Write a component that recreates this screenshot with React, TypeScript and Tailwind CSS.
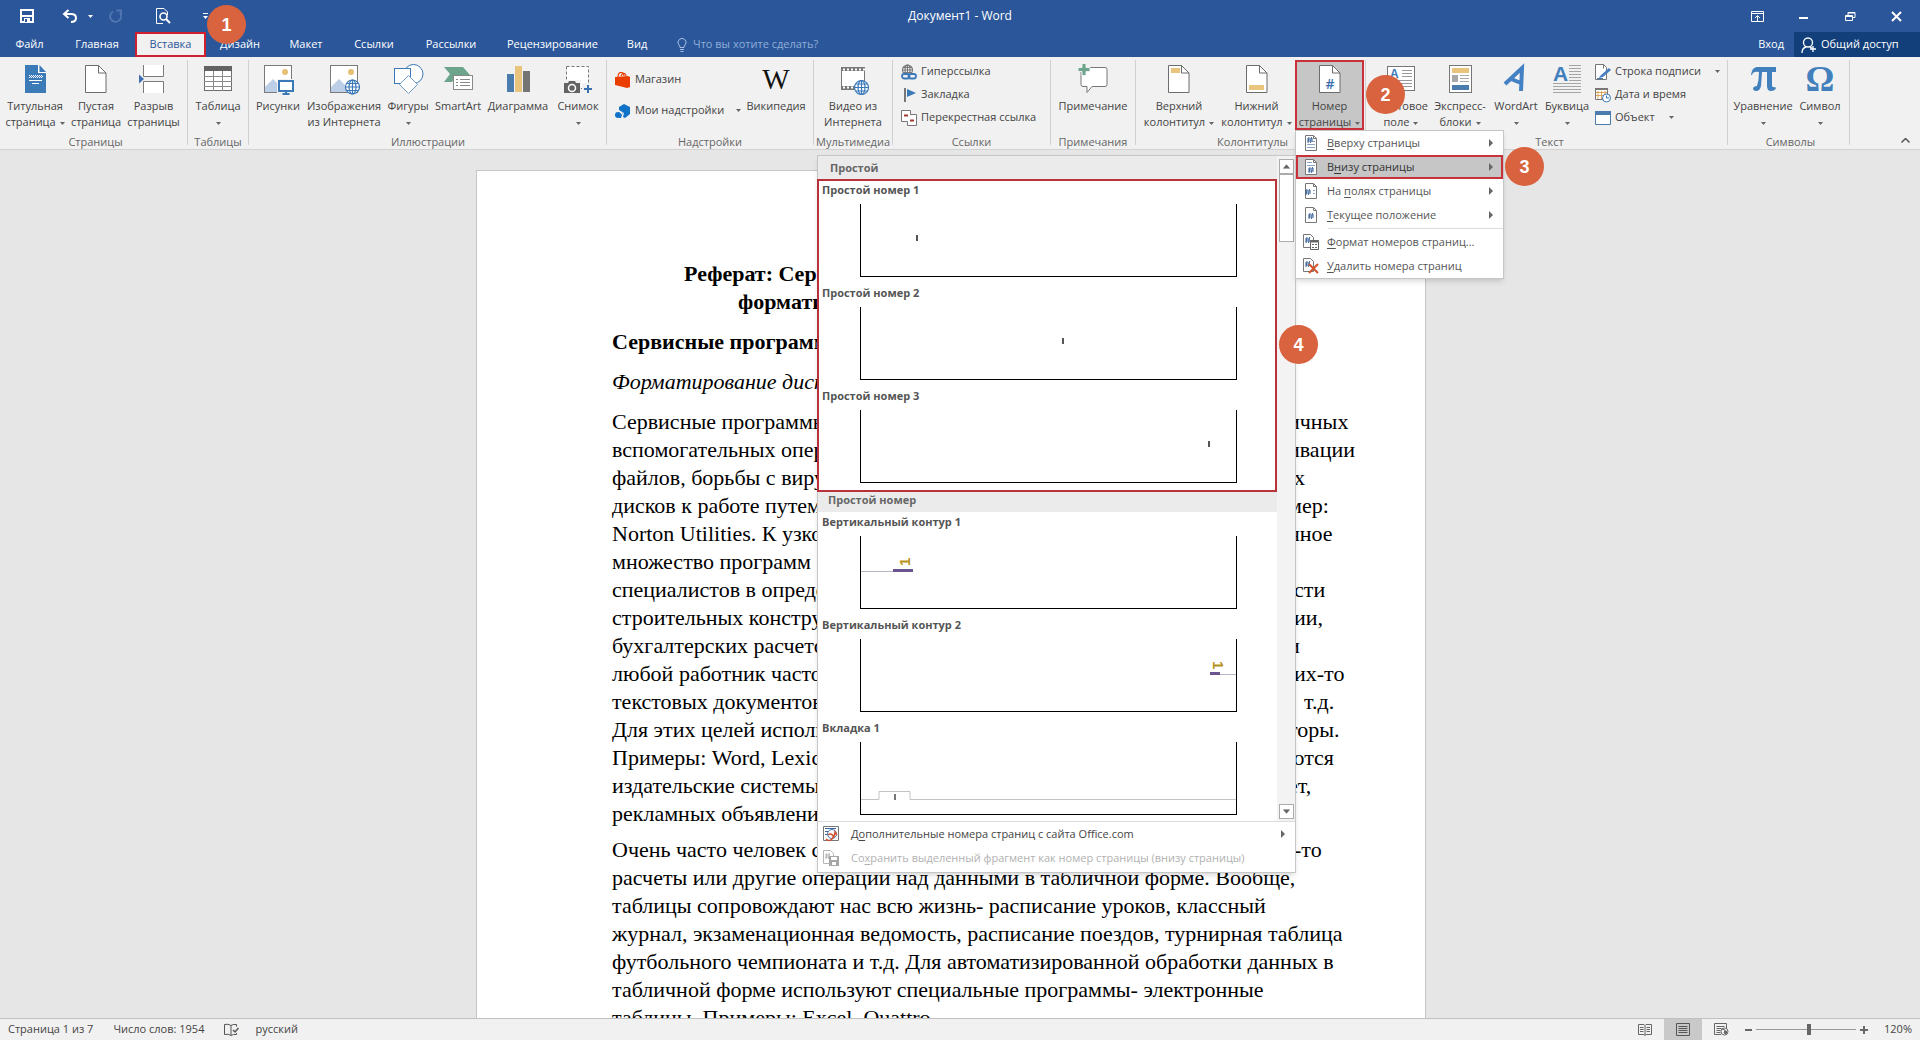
import React from "react";
import { clsx } from "clsx";

type IconProps = { children: React.ReactNode; className?: string };

const BigSvg: React.FC<IconProps> = ({ children, className }) => (
  <svg viewBox="0 0 32 32" className={clsx("h-8 w-8 shrink-0", className)} fill="none" aria-hidden="true">
    {children}
  </svg>
);

const SmallSvg: React.FC<IconProps> = ({ children, className }) => (
  <svg viewBox="0 0 16 16" className={clsx("h-4 w-4 shrink-0", className)} fill="none" aria-hidden="true">
    {children}
  </svg>
);

const Caret: React.FC<{ className?: string }> = ({ className }) => (
  <svg viewBox="0 0 5 3" className={clsx("inline-block h-[3px] w-[5px] shrink-0 align-middle", className)} aria-hidden="true">
    <path d="M0 0h5L2.5 3z" fill="currentColor" />
  </svg>
);

/* ---------- ribbon icons ---------- */

const PageOutline = () => <path d="M5.5 2.5h13l7.5 7.5v19.500H5.500z" fill="#fff" stroke="#6d6d6d" />;

const Fold = () => <path d="M18.5 2.5v7.5h7.500" stroke="#6d6d6d" />;

const CoverPageIcon = () => (
  <BigSvg>
    <path d="M6 2h13v8h8v20H6z" fill="#3d7ab8" />
    <path d="M20.5 2l6.5 7h-6.5z" fill="#3d7ab8" />
    <path d="M19.5 2v7.5H27" stroke="#fff" />
    <path d="M10 12.5h13M10 14.5h13" stroke="#fff" strokeDasharray="1 1" />
    <path d="M11 13.5h13" stroke="#fff" strokeDasharray="1 1" />
    <path d="M10 17.5h13M13 20.5h7" stroke="#fff" />
  </BigSvg>
);

const BlankPageIcon = () => (
  <BigSvg>
    <PageOutline />
    <Fold />
  </BigSvg>
);

const PageBreakIcon = () => (
  <BigSvg>
    <path d="M5.5 2v11.5h20V2" fill="#fff" stroke="#7a7a7a" />
    <path d="M5.5 30V18.5h20V30" fill="#fff" stroke="#7a7a7a" />
    <path d="M1 11.5l5 4.5-5 4.5z" fill="#3f6fae" />
  </BigSvg>
);

const TableIcon = () => (
  <BigSvg>
    <rect x="2.5" y="3.5" width="27" height="24" fill="#fff" stroke="#6d6d6d" />
    <path d="M2 3h28v5H2z" fill="#636363" />
    <path d="M11.5 8v20M20.5 8v20M2 13.5h28M2 18.5h28M2 23.5h28" stroke="#8a8a8a" />
  </BigSvg>
);

const Photo = () => (
  <>
    <rect x="2.5" y="2.5" width="27" height="27" fill="#fff" stroke="#7a7a7a" />
    <circle cx="23" cy="9" r="3" fill="#e5bf74" />
    <path d="M3 24l8-8 8 8v5H3z" fill="#bccfe6" />
  </>
);

const PicturesIcon = () => (
  <BigSvg>
    <Photo />
    <path d="M15 16h17v15H15z" fill="#f1f1f1" />
    <rect x="17" y="18" width="14" height="10" fill="#fff" stroke="#3b78b8" strokeWidth="2" />
    <path d="M24 28v3M20.5 31h7" stroke="#3b78b8" strokeWidth="2" />
  </BigSvg>
);

const Globe: React.FC<{ cx: number; cy: number; r: number; color?: string }> = ({ cx, cy, r, color = "#3b78b8" }) => (
  <g stroke={color} strokeWidth="1.2" fill="none">
    <circle cx={cx} cy={cy} r={r} fill="#fff" />
    <ellipse cx={cx} cy={cy} rx={r / 2} ry={r} />
    <path d={`M${cx - r} ${cy}h${2 * r}M${cx - r + 1} ${cy - r / 2}h${2 * r - 2}M${cx - r + 1} ${cy + r / 2}h${2 * r - 2}M${cx} ${cy - r}v${2 * r}`} />
  </g>
);

const OnlinePicturesIcon = () => (
  <BigSvg>
    <Photo />
    <Globe cx={24.5} cy={24} r={7} />
  </BigSvg>
);

const ShapesIcon = () => (
  <BigSvg>
    <circle cx="21.5" cy="11" r="9.5" fill="#fff" stroke="#3b78b8" />
    <rect x="2.5" y="5.5" width="16" height="15" fill="#fff" stroke="#3b78b8" />
    <path d="M16.5 12.5l9 9-9 9-9-9z" fill="#fff" stroke="#6f9ccb" />
  </BigSvg>
);

const SmartArtIcon = () => (
  <BigSvg>
    <path d="M2 4h19l7 8v3H13l-3 4H2l6-8z" fill="#6da58c" />
    <rect x="11.5" y="12.5" width="19" height="14" fill="#fff" stroke="#8a8a8a" />
    <path d="M14 16.5h2M18 16.5h10M14 19.5h2M18 19.5h10M14 22.5h2M18 22.5h10" stroke="#8a8a8a" />
  </BigSvg>
);

const ChartIcon = () => (
  <BigSvg>
    <path d="M5 11h7v18H5z" fill="#4a7dae" />
    <path d="M13 3h7v26h-7z" fill="#e8c47c" />
    <path d="M21 8h7v21h-7z" fill="#757575" />
  </BigSvg>
);

const ScreenshotIcon = () => (
  <BigSvg>
    <rect x="4.5" y="3.5" width="22" height="22" fill="#fff" stroke="#777" strokeDasharray="3 2" />
    <path d="M1 17h18v14H1z" fill="#f1f1f1" opacity=".9" />
    <path d="M2 20h4l1-2h6l1 2h4v10H2z" fill="#636363" />
    <circle cx="10" cy="25" r="3.5" stroke="#fff" strokeWidth="1.5" />
    <path d="M20 20h12v12H20z" fill="#f1f1f1" />
    <path d="M22 26h8M26 22v8" stroke="#3b6fae" strokeWidth="2" />
  </BigSvg>
);

const WikipediaIcon = () => (
  <BigSvg>
    <text x="16" y="26" textAnchor="middle" fontFamily="Liberation Serif, serif" fontSize="29" fill="#111">
      W
    </text>
  </BigSvg>
);

const OnlineVideoIcon = () => (
  <BigSvg>
    <rect x="4.5" y="4.5" width="23" height="22" fill="#fff" stroke="#777" />
    <path d="M5 6.5h23M5 24.5h23" stroke="#777" strokeWidth="3" />
    <path d="M6 6.5h22M6 24.5h22" stroke="#fff" strokeWidth="2" strokeDasharray="2 2" />
    <Globe cx={24.5} cy={24.5} r={7} />
  </BigSvg>
);

const CommentIcon = () => (
  <BigSvg>
    <path d="M6 4.5h22q2 0 2 2v15q0 2-2 2H15l-5 6v-6H6q-2 0-2-2v-15q0-2 2-2z" fill="#fff" stroke="#777" />
    <path d="M1 4.500h4v-4h4v4h4v4H9v4H5v-4H1z" fill="#6da58c" stroke="#f1f1f1" />
  </BigSvg>
);

const HeaderIcon = () => (
  <BigSvg>
    <PageOutline />
    <path d="M8 5h9v5H8z" fill="#e8c47c" />
    <Fold />
  </BigSvg>
);

const FooterIcon = () => (
  <BigSvg>
    <PageOutline />
    <path d="M8 22h15v5H8z" fill="#e8c47c" />
    <Fold />
  </BigSvg>
);

const PageNumberIcon = () => (
  <BigSvg>
    <PageOutline />
    <Fold />
    <text x="16" y="26" textAnchor="middle" fontFamily="Open Sans, sans-serif" fontSize="14" fontWeight="600" fill="#3b6fae">
      #
    </text>
  </BigSvg>
);

const TextBoxIcon = () => (
  <BigSvg>
    <rect x="2.5" y="3.5" width="27" height="24" fill="#fff" stroke="#777" />
    <text x="5" y="15" fontFamily="Liberation Sans, sans-serif" fontSize="12" fontWeight="700" fill="#3b78b8">
      A
    </text>
    <path d="M17 7.5h10M17 10.5h10M17 13.5h10M5 17.5h22M5 20.5h22M5 23.5h22" stroke="#999" />
  </BigSvg>
);

const QuickPartsIcon = () => (
  <BigSvg>
    <rect x="5.5" y="2.5" width="22" height="27" fill="#fff" stroke="#777" />
    <path d="M8 5h17v5H8z" fill="#e8c47c" />
    <path d="M8 12h6v7H8z" fill="#a8a8a8" />
    <path d="M16 12.5h9M16 15.5h9M16 18.5h9" stroke="#aaa" />
    <path d="M8 22h17v5H8z" fill="#4a7dae" />
  </BigSvg>
);

const WordArtIcon = () => (
  <BigSvg>
    <path d="M5 21L22 5l-1 23M11 16l10 4" stroke="#4381c4" strokeWidth="4" />
  </BigSvg>
);

const DropCapIcon = () => (
  <BigSvg>
    <text x="2" y="18" fontFamily="Liberation Sans, sans-serif" fontSize="21" fontWeight="700" fill="#4280bd">
      A
    </text>
    <path
      d="M18 2.5h12M18 5.5h12M18 8.5h12M18 11.5h12M18 14.5h12M18 17.5h12M2 20.5h28M2 23.5h28M2 26.5h28M2 29.5h28"
      stroke="#a5a5a5"
    />
  </BigSvg>
);

const EquationIcon = () => (
  <BigSvg>
    <path
      d="M4 12C5 6 7 4 11 4h18v5h-4v13q0 3 3 2l1 1q-1 3-5 3-4 0-4-5V9h-5l-1 14q-1 5-5 5-3 0-3-3 1-2 4-2 2-6 2-14Q6 8 5 12z"
      fill="#4280bd"
    />
  </BigSvg>
);

const SymbolIcon = () => (
  <BigSvg>
    <text x="16" y="28" textAnchor="middle" fontFamily="Liberation Serif, serif" fontSize="36" fontWeight="700" fill="#4280bd">
      Ω
    </text>
  </BigSvg>
);

const StoreIcon = () => (
  <SmallSvg>
    <path d="M0 5l13-1 2 1v10l-3 1L0 13z" fill="#ea3d00" />
    <path d="M3 5q0-5 4-4.5Q9 1 9 4M6 4q1-3 3.5-2.5Q11 2 11 4" stroke="#ea3d00" strokeWidth="1.2" />
  </SmallSvg>
);

const AddinsIcon = () => (
  <SmallSvg>
    <path d="M9 1l6 3v7l-5 4-2-1 1-4-5-3V4z" fill="#1173c7" />
    <circle cx="3" cy="12" r="3" fill="#1173c7" />
    <path d="M8 9l-2 6H4z" fill="#1173c7" />
  </SmallSvg>
);

const LinkIcon = () => (
  <SmallSvg>
    <Globe cx={6.5} cy={6} r={5} color="#777" />
    <path d="M1 9h15v7H1z" fill="#f1f1f1" />
    <rect x="1" y="10" width="7.5" height="4.5" rx="2.2" stroke="#3b78b8" strokeWidth="1.8" />
    <rect x="7.5" y="10" width="7.5" height="4.5" rx="2.2" stroke="#3b78b8" strokeWidth="1.8" />
  </SmallSvg>
);

const BookmarkIcon = () => (
  <SmallSvg>
    <path d="M4 1v14" stroke="#777" strokeWidth="2" />
    <path d="M6 2l9 4-9 4z" fill="#3b78b8" />
  </SmallSvg>
);

const CrossRefIcon = () => (
  <SmallSvg>
    <path d="M.5.5h9v11h-9z" fill="#fff" stroke="#777" />
    <path d="M9.5 4.5h6v11h-9v-4" fill="#fff" stroke="#777" />
    <path d="M3 5.5h4M9 10.5h4" stroke="#a33b2e" strokeWidth="2" />
  </SmallSvg>
);

const SignatureIcon = () => (
  <SmallSvg>
    <path d="M.5.5h8l3 3v12H.5z" fill="#fff" stroke="#777" />
    <path d="M8.5.5v4" stroke="#777" />
    <path d="M5 12l9-8 2 2-8 7-4 1z" fill="#4a7dc0" />
    <path d="M2 14.5h6" stroke="#3b78b8" />
  </SmallSvg>
);

const DateIcon = () => (
  <SmallSvg>
    <path d="M.5 1.5h12v11H.5z" fill="#fff" stroke="#777" />
    <path d="M0 1h13v2H0z" fill="#777" />
    <path d="M3 4v8M6.5 4v8M10 4v8M1 5.5h11M1 8.5h11" stroke="#dca45c" />
    <circle cx="11.5" cy="11" r="4" fill="#fff" stroke="#3b78b8" />
    <path d="M11.5 8.5V11H14" stroke="#3b78b8" />
  </SmallSvg>
);

const ObjectIcon = () => (
  <SmallSvg>
    <path d="M.5 1.5h15v13H.5z" fill="#fff" stroke="#4a7dae" />
    <path d="M0 1h16v4H0z" fill="#4a7dae" />
  </SmallSvg>
);

/* ---------- ribbon pieces ---------- */

type BigButtonProps = {
  icon: React.ReactNode;
  first: string;
  second?: string;
  caret?: boolean;
  className?: string;
};

const BigButton: React.FC<BigButtonProps> = ({ icon, first, second, caret, className }) => (
  <button type="button" className={clsx("flex h-[70px] shrink-0 flex-col items-center whitespace-nowrap pt-[3px]", className)}>
    {icon}
    <span className="mt-[3px] leading-4">{first}</span>
    {(second || caret) && (
      <span className="leading-4">
        {second}
        {caret && <Caret className={clsx("text-[#666]", second && "ml-1")} />}
      </span>
    )}
  </button>
);

const SmallButton: React.FC<{ icon: React.ReactNode; label: string; caret?: string }> = ({ icon, label, caret }) => (
  <button type="button" className="flex h-[23px] items-center gap-1 whitespace-nowrap">
    {icon}
    <span>{label}</span>
    {caret && <Caret className={clsx("text-[#666]", caret)} />}
  </button>
);

const Group: React.FC<{ title: string; className?: string; children: React.ReactNode }> = ({ title, className, children }) => (
  <section aria-label={title} className={clsx("flex h-[85px] shrink-0 flex-col border-r border-[#d0d0d0]", className)}>
    <div className="flex h-[74px] shrink-0 items-start">{children}</div>
    <h2 className="text-center leading-4 text-[#666]">{title}</h2>
  </section>
);

const Badge: React.FC<{ n: number; className: string }> = ({ n, className }) => (
  <span
    className={clsx(
      "absolute z-30 flex h-[39px] w-[39px] items-center justify-center rounded-full bg-[#d9633f] font-['Liberation_Sans',sans-serif] text-lg font-bold text-white",
      className
    )}
  >
    {n}
  </span>
);

/* ---------- page number menu ---------- */

const MenuPage: React.FC<{ x: number; y: number; lines?: string }> = ({ x, y, lines }) => (
  <SmallSvg>
    <path d="M2.5.5h8l3 3v12h-11z" fill="#fff" stroke="#777" />
    <path d="M10.5.5v3h3" stroke="#777" />
    {lines && <path d={lines} stroke="#8aa5c4" />}
    <path d={`M${x + 2} ${y}l-1 6M${x + 4.5} ${y}l-1 6M${x} ${y + 2}h6M${x} ${y + 4}h6`} stroke="#3d659b" />
  </SmallSvg>
);

const FormatIcon = () => (
  <SmallSvg>
    <path d="M.5.5h7l3 3v10H.5z" fill="#fff" stroke="#777" />
    <path d="M4 3L3 9M6.5 3l-1 6M2 5h5M2 7h5" stroke="#3d659b" />
    <path d="M7.5 6.5h8v9h-8z" fill="#fff" stroke="#666" />
    <path d="M7 7.5h9" stroke="#666" strokeWidth="2" />
    <path d="M9 10.5h2M12 10.5h2M9 13.5h2M12 13.5h2" stroke="#666" />
  </SmallSvg>
);

const RemoveIcon = () => (
  <SmallSvg>
    <path d="M.5.5h7l3 3v10H.5z" fill="#fff" stroke="#777" />
    <path d="M4 3L3 9M6.5 3l-1 6M2 5h5M2 7h5" stroke="#3d659b" />
    <path d="M6 6l9 9M15 6l-9 9" stroke="#d2522e" strokeWidth="2" />
  </SmallSvg>
);

const OfficeIcon = () => (
  <SmallSvg>
    <path d="M.5.5h15v14H.5z" fill="#fff" stroke="#777" />
    <path d="M2 2.5h11M2 5.5h3M2 8.5h2" stroke="#3d659b" />
    <circle cx="9" cy="8" r="4.5" stroke="#3b78b8" />
    <path d="M3 13q3 3 6 0t3-7l2 3M5 9q4-3 6 3" stroke="#d2522e" strokeWidth="1.5" />
  </SmallSvg>
);

const SaveSelectionIcon = () => (
  <SmallSvg>
    <path d="M.5.5h7l3 3v10H.5z" fill="#fff" stroke="#b5b5b5" />
    <path d="M4 3L3 9M6.5 3l-1 6M2 5h5M2 7h5" stroke="#b5b5b5" />
    <path d="M6 6h10v10H6z" fill="#a6a6a6" />
    <path d="M8 7h6v3H8zM9 12h4v3H9z" fill="#fff" />
  </SmallSvg>
);

const SubArrow = () => (
  <svg viewBox="0 0 4 8" className="ml-auto h-2 w-1" aria-hidden="true">
    <path d="M0 0l4 4-4 4z" fill="#666" />
  </svg>
);

type MenuItem = { before?: string; key: string; after: string; icon: React.ReactNode; sub?: boolean; active?: boolean };

const menuItems: MenuItem[] = [
  { key: "В", after: "верху страницы", icon: <MenuPage x={4} y={2} lines="M9 6.5h3M4 9.5h8M4 12.5h8" />, sub: true },
  { before: "В", key: "н", after: "изу страницы", icon: <MenuPage x={5} y={8} lines="M4 3.5h5M4 6.5h8" />, sub: true, active: true },
  { before: "На ", key: "п", after: "олях страницы", icon: <MenuPage x={2} y={6} lines="M10 7.5h2M10 10.5h2" />, sub: true },
  { key: "Т", after: "екущее положение", icon: <MenuPage x={5} y={6} />, sub: true },
  { key: "Ф", after: "ормат номеров страниц...", icon: <FormatIcon /> },
  { key: "У", after: "далить номера страниц", icon: <RemoveIcon /> },
];

const PageNumberMenu = () => (
  <div role="menu" className="absolute left-0 top-full w-[209px] border border-[#c6c6c6] bg-white text-[#555] shadow-md">
    {menuItems.map((item, i) => (
      <React.Fragment key={item.after}>
        {i === 4 && <div className="my-px ml-8 h-px bg-[#dcdcdc]" />}
        <button
          type="button"
          role="menuitem"
          className={clsx(
            "flex h-6 w-full items-center gap-2 border-2 pl-[5px] pr-2 text-left",
            item.active ? "border-[#c8313a] bg-[#c6c6c6] text-[#333]" : "border-transparent"
          )}
        >
          {item.icon}
          <span className="whitespace-nowrap">
            {item.before}
            <u className="underline-offset-2">{item.key}</u>
            {item.after}
          </span>
          {item.sub && <SubArrow />}
        </button>
      </React.Fragment>
    ))}
    <Badge n={3} className="left-full top-4 ml-[2px]" />
  </div>
);

/* ---------- gallery of page numbers ---------- */

const PreviewItem: React.FC<{ title: string; children: React.ReactNode }> = ({ title, children }) => (
  <button type="button" className="block w-full pb-[7px] text-left">
    <span className="block pl-0.5 font-bold leading-[18px] text-[#555]">{title}</span>
    <span className="ml-10 mt-[5px] block h-[73px] w-[377px] border border-t-0 border-black bg-white">
      <svg viewBox="0 0 375 72" className="h-[72px] w-[375px]" aria-hidden="true">
        {children}
      </svg>
    </span>
  </button>
);

const Gallery = () => (
  <div className="absolute right-full top-[95px] -mr-px w-[479px] border border-[#c6c6c6] bg-white shadow-md">
    <div className="flex">
      <div className="min-w-0 flex-1">
        <h3 className="h-[23px] bg-[#ebebeb] pl-3 font-bold leading-6 text-[#666]">Простой</h3>
        <div className="-ml-px border-2 border-[#b8323c] pl-px">
          <PreviewItem title="Простой номер 1">
            <path d="M55 31h2v6h-2z" fill="#555" />
          </PreviewItem>
          <PreviewItem title="Простой номер 2">
            <path d="M201 31h2v6h-2z" fill="#555" />
          </PreviewItem>
          <PreviewItem title="Простой номер 3">
            <path d="M347 31h2v6h-2z" fill="#555" />
          </PreviewItem>
        </div>
        <h3 className="h-5 bg-[#ebebeb] pl-2.5 font-bold leading-4 text-[#666]">Простой номер</h3>
        <div className="h-[309px] overflow-hidden pl-0.5 pt-px">
          <PreviewItem title="Вертикальный контур 1">
            <path d="M0 35.5h32" stroke="#b9b5c8" />
            <path d="M32 33h20v3H32z" fill="#6a5590" />
            <text transform="translate(49 30) rotate(-90)" fontFamily="Liberation Sans, sans-serif" fontSize="15" fontWeight="700" fill="#b8921a">
              1
            </text>
          </PreviewItem>
          <PreviewItem title="Вертикальный контур 2">
            <path d="M359 35.5h16" stroke="#b9b5c8" />
            <path d="M349 33h10v3h-10z" fill="#6a5590" />
            <text transform="translate(352 22) rotate(90)" fontFamily="Liberation Sans, sans-serif" fontSize="15" fontWeight="700" fill="#b8921a">
              1
            </text>
          </PreviewItem>
          <PreviewItem title="Вкладка 1">
            <path d="M0 57.5h18v-8h31v8h326" stroke="#c4c4c4" fill="none" />
            <path d="M33 52h2v6h-2z" fill="#777" />
          </PreviewItem>
        </div>
      </div>
      <div className="flex w-[18px] flex-col items-center bg-[#f3f3f3] pb-0.5 pt-[3px]">
        <button type="button" aria-label="Вверх" className="flex h-[15px] w-[15px] items-center justify-center border border-[#ababab] bg-white">
          <Caret className="rotate-180 scale-150 text-[#666]" />
        </button>
        <div className="h-[68px] w-[15px] border border-[#ababab] bg-white" />
        <button type="button" aria-label="Вниз" className="mt-auto flex h-[15px] w-[15px] items-center justify-center border border-[#ababab] bg-white">
          <Caret className="scale-150 text-[#666]" />
        </button>
      </div>
    </div>
    <div className="border-t border-[#dcdcdc] pb-0.5">
      <button type="button" className="flex h-6 w-full items-center gap-3 pl-[5px] pr-2.5 text-[#444]">
        <OfficeIcon />
        <span>
          Д<u className="underline-offset-2">о</u>полнительные номера страниц с сайта Office.com
        </span>
        <SubArrow />
      </button>
      <button type="button" disabled className="flex h-6 w-full items-center gap-3 pl-[5px] text-[#b1b1b1]">
        <SaveSelectionIcon />
        <span>
          Со<u className="underline-offset-2">х</u>ранить выделенный фрагмент как номер страницы (внизу страницы)
        </span>
      </button>
    </div>
    <Badge n={4} className="left-full top-[169px] -ml-4" />
  </div>
);

/* ---------- title bar and tabs ---------- */

const TitleBar = () => (
  <div className="relative flex h-8 items-center justify-center text-white">
    <div className="absolute inset-y-0 left-5 flex items-center">
      <button type="button" aria-label="Сохранить">
        <svg viewBox="0 0 14 14" className="h-3.5 w-3.5" fill="none" aria-hidden="true">
          <path d="M1 1h12v12H1z" stroke="#fff" strokeWidth="2" />
          <path d="M2 7h10" stroke="#fff" strokeWidth="2" />
          <path d="M4 9h6v4H4z" fill="#fff" />
          <path d="M5 10h2v3H5z" fill="#2b579a" />
        </svg>
      </button>
      <button type="button" aria-label="Отменить" className="ml-7 flex items-center gap-2.5">
        <svg viewBox="0 0 16 14" className="h-3.5 w-4" fill="none" aria-hidden="true">
          <path d="M2 5h7q5 0 5 4t-5 4M6.5 1L2 5l4.5 4" stroke="#fff" strokeWidth="2" />
        </svg>
        <Caret />
      </button>
      <button type="button" aria-label="Повторить" disabled className="ml-4">
        <svg viewBox="0 0 14 14" className="h-3.5 w-3.5" fill="none" aria-hidden="true">
          <path d="M4 2.5a5.5 5.5 0 1 0 7 1.500M7.5 1.5H12V6" stroke="#5377b3" strokeWidth="1.8" />
        </svg>
      </button>
      <button type="button" aria-label="Просмотр и печать" className="ml-8">
        <svg viewBox="0 0 16 16" className="h-4 w-4" fill="none" aria-hidden="true">
          <path d="M12.5 7V4L9 .5H1.5v15H8" stroke="#fff" />
          <circle cx="8.5" cy="8.5" r="3.5" stroke="#fff" strokeWidth="1.6" />
          <path d="M11 11l4 4" stroke="#fff" strokeWidth="2" />
        </svg>
      </button>
      <button type="button" aria-label="Настройка панели" className="ml-8 flex flex-col items-center gap-0.5">
        <span className="h-px w-[5px] bg-white" />
        <Caret />
      </button>
    </div>
    <h1 className="text-xs">Документ1 - Word</h1>
    <div className="absolute inset-y-0 right-[18px] flex items-center">
      <button type="button" aria-label="Параметры ленты">
        <svg viewBox="0 0 13 11" className="h-[11px] w-[13px]" fill="none" stroke="#fff" aria-hidden="true">
          <path d="M.5.5h12v10H.5zM.5 2.5h12M6.5 10V5M4 7l2.500-2.500L9 7" />
        </svg>
      </button>
      <button type="button" aria-label="Свернуть" className="ml-[35px] mt-1">
        <span className="block h-0.5 w-[9px] bg-white" />
      </button>
      <button type="button" aria-label="Восстановить" className="ml-[37px]">
        <svg viewBox="0 0 11 11" className="h-[11px] w-[11px]" fill="none" stroke="#fff" aria-hidden="true">
          <path d="M.5 4.5h7v5h-7zM.5 5.5h7M3 4V1.5h7v5H8M3 2h7" />
        </svg>
      </button>
      <button type="button" aria-label="Закрыть" className="ml-[35px]">
        <svg viewBox="0 0 11 11" className="h-[11px] w-[11px]" stroke="#fff" strokeWidth="2" aria-hidden="true">
          <path d="M1 1l9 9M10 1l-9 9" />
        </svg>
      </button>
    </div>
    <Badge n={1} className="left-[207px] top-[5px]" />
  </div>
);

const tabs = [
  { name: "Файл", width: "w-[59px]" },
  { name: "Главная", width: "w-[76px]" },
  { name: "Вставка", width: "w-[71px]" },
  { name: "Дизайн", width: "w-[68px]" },
  { name: "Макет", width: "w-16" },
  { name: "Ссылки", width: "w-[72px]" },
  { name: "Рассылки", width: "w-[82px]" },
  { name: "Рецензирование", width: "w-[121px]" },
  { name: "Вид", width: "w-12" },
];

const TabBar = () => (
  <nav className="flex h-[25px] items-stretch text-white">
    {tabs.map((tab) => (
      <button
        key={tab.name}
        type="button"
        className={clsx(
          "flex shrink-0 items-center justify-center whitespace-nowrap",
          tab.width,
          tab.name === "Вставка" && "border-2 border-[#d02030] bg-[#f1f1f1] text-[#2b579a]"
        )}
      >
        {tab.name}
      </button>
    ))}
    <label className="ml-4 flex items-center gap-1.5 text-[#a9c0e4]">
      <svg viewBox="0 0 10 14" className="h-3.5 w-2.5" fill="none" stroke="currentColor" aria-hidden="true">
        <path d="M3 9.5Q3 8 1.8 6.8A4 4 0 1 1 8.2 6.8Q7 8 7 9.5zM3 11.5h4M3.5 13.5h3" />
      </svg>
      <input
        type="text"
        aria-label="Помощник"
        placeholder="Что вы хотите сделать?"
        className="w-40 bg-transparent outline-none placeholder:text-[#8fadd9]"
      />
    </label>
    <a href="#signin" className="ml-auto mr-2.5 flex items-center">
      Вход
    </a>
    <button type="button" className="flex w-[126px] items-center gap-1 whitespace-nowrap bg-[#123f7a] pl-[7px]">
      <svg viewBox="0 0 16 16" className="h-4 w-4" fill="none" stroke="#fff" strokeWidth="1.3" aria-hidden="true">
        <circle cx="7" cy="5.5" r="4.5" />
        <path d="M1 16q0-5 4-6M9 10l2 1M12 9v6M9 12h6" />
      </svg>
      Общий доступ
    </button>
  </nav>
);

const Ribbon = () => (
  <div className="flex h-[93px] items-start border-b border-[#d2d2d2] bg-[#f1f1f1] pt-[3px] text-[#444]">
    <Group title="Страницы" className="w-[188px] pl-1">
      <BigButton icon={<CoverPageIcon />} first="Титульная" second="страница" caret className="w-[62px]" />
      <BigButton icon={<BlankPageIcon />} first="Пустая" second="страница" className="w-[60px]" />
      <BigButton icon={<PageBreakIcon />} first="Разрыв" second="страницы" className="w-[55px]" />
    </Group>
    <Group title="Таблицы" className="w-[61px]">
      <BigButton icon={<TableIcon />} first="Таблица" caret className="w-[60px]" />
    </Group>
    <Group title="Иллюстрации" className="w-[358px] pl-px">
      <BigButton icon={<PicturesIcon />} first="Рисунки" className="w-14" />
      <BigButton icon={<OnlinePicturesIcon />} first="Изображения" second="из Интернета" className="w-[76px]" />
      <BigButton icon={<ShapesIcon />} first="Фигуры" caret className="w-[52px]" />
      <BigButton icon={<SmartArtIcon />} first="SmartArt" className="w-12" />
      <BigButton icon={<ChartIcon />} first="Диаграмма" className="w-[72px]" />
      <BigButton icon={<ScreenshotIcon />} first="Снимок" caret className="w-12" />
    </Group>
    <Group title="Надстройки" className="w-[207px]">
      <div className="flex w-[136px] flex-col gap-2 pl-2 pt-2">
        <SmallButton icon={<StoreIcon />} label="Магазин" />
        <SmallButton icon={<AddinsIcon />} label="Мои надстройки" caret="ml-2" />
      </div>
      <BigButton icon={<WikipediaIcon />} first="Википедия" className="w-[66px]" />
    </Group>
    <Group title="Мультимедиа" className="w-[79px]">
      <BigButton icon={<OnlineVideoIcon />} first="Видео из" second="Интернета" className="w-full" />
    </Group>
    <Group title="Ссылки" className="w-[158px]">
      <div className="flex flex-col pl-2">
        <SmallButton icon={<LinkIcon />} label="Гиперссылка" />
        <SmallButton icon={<BookmarkIcon />} label="Закладка" />
        <SmallButton icon={<CrossRefIcon />} label="Перекрестная ссылка" />
      </div>
    </Group>
    <Group title="Примечания" className="w-[85px]">
      <BigButton icon={<CommentIcon />} first="Примечание" className="w-full" />
    </Group>
    <Group title="Колонтитулы" className="w-[230px] pl-1">
      <BigButton icon={<HeaderIcon />} first="Верхний" second="колонтитул" caret className="w-[78px]" />
      <BigButton icon={<FooterIcon />} first="Нижний" second="колонтитул" caret className="w-[77px]" />
      <div className="relative z-20 w-[69px]">
        <BigButton
          icon={<PageNumberIcon />}
          first="Номер"
          second="страницы"
          caret
          className="w-full bg-[#c6c6c6] outline-2 -outline-offset-2 outline-[#c8313a]"
        />
        <Gallery />
        <PageNumberMenu />
        <Badge n={2} className="left-full top-[15px] ml-[2px]" />
      </div>
    </Group>
    <Group title="Текст" className="w-[362px] pl-1.5">
      <BigButton icon={<TextBoxIcon />} first="Текстовое" second="поле" caret className="w-[58px]" />
      <BigButton icon={<QuickPartsIcon />} first="Экспресс-" second="блоки" caret className="w-[60px]" />
      <BigButton icon={<WordArtIcon />} first="WordArt" caret className="w-[52px]" />
      <BigButton icon={<DropCapIcon />} first="Буквица" caret className="w-[50px]" />
      <div className="flex flex-col pl-[3px]">
        <SmallButton icon={<SignatureIcon />} label="Строка подписи" caret="ml-2.5" />
        <SmallButton icon={<DateIcon />} label="Дата и время" />
        <SmallButton icon={<ObjectIcon />} label="Объект" caret="ml-2.5" />
      </div>
    </Group>
    <Group title="Символы" className="w-[122px] pl-1">
      <BigButton icon={<EquationIcon />} first="Уравнение" caret className="w-[62px]" />
      <BigButton icon={<SymbolIcon />} first="Символ" caret className="w-[52px]" />
    </Group>
    <button type="button" aria-label="Свернуть ленту" className="ml-auto mr-2.5 self-end pb-1.5">
      <svg viewBox="0 0 9 5" className="h-[5px] w-[9px]" fill="none" stroke="#555" strokeWidth="1.5" aria-hidden="true">
        <path d="M.5 4.5l4-4 4 4" />
      </svg>
    </button>
  </div>
);

/* ---------- document ---------- */

// start of the line, its end to the right of the gallery, indent of that end
const bodyLines: [string, string, string?][] = [
  ["Сервисные программы", "ичных"],
  ["вспомогательных операций", "ивации"],
  ["файлов, борьбы с вирусами", "х", "pl-1.5"],
  ["дисков к работе путем", "мер:"],
  ["Norton Utilities. К узко", "нное"],
  ["множество программ", ""],
  ["специалистов в определ", "сти", "pl-1.5"],
  ["строительных конструкций", "ии,", "pl-1.5"],
  ["бухгалтерских расчетов", "и"],
  ["любой работник часто", "их-то", "pl-1.5"],
  ["текстовых документов", "т.д.", "pl-4"],
  ["Для этих целей использ", "торы."],
  ["Примеры: Word, Lexicon", "ются"],
  ["издательские системы", "ет,"],
  ["рекламных объявлений", ""],
];

const tableLines = [
  "расчеты или другие операции над данными в табличной форме. Вообще,",
  "таблицы сопровождают нас всю жизнь- расписание уроков, классный",
  "журнал, экзаменационная ведомость, расписание поездов, турнирная таблица",
  "футбольного чемпионата и т.д. Для автоматизированной обработки данных в",
  "табличной форме используют специальные программы- электронные",
  "таблицы. Примеры: Excel, Quattro",
];

const SplitLine: React.FC<{ start: string; end: string; indent?: string }> = ({ start, end, indent }) => (
  <span className="grid grid-cols-[676px_1fr]">
    <span>{start}</span>
    <span className={indent}>{end}</span>
  </span>
);

const Document = () => (
  <main className="min-h-0 flex-1 overflow-hidden bg-[#e6e6e6] pr-[18px] pt-5">
    <article className="mx-auto min-h-full w-[950px] whitespace-nowrap border border-[#c6c6c6] bg-white pl-[135px] pt-[89px] font-['Liberation_Serif','Times_New_Roman',serif] text-[22px] leading-7 text-black">
      <h1 className="pl-[72px] font-bold">
        Реферат: Сервисные
        <span className="block pl-[54px]">форматирование</span>
      </h1>
      <h2 className="mt-3 font-bold">Сервисные программы</h2>
      <h3 className="mt-3 italic">Форматирование дисков</h3>
      <p className="mt-3">
        {bodyLines.map(([start, end, indent]) => (
          <SplitLine key={start} start={start} end={end} indent={indent} />
        ))}
      </p>
      <p className="mt-2">
        <SplitLine start="Очень часто человек с" end="-то" indent="pl-1.5" />
        {tableLines.map((line) => (
          <span key={line} className="block">
            {line}
          </span>
        ))}
      </p>
    </article>
  </main>
);

const StatusBar = () => (
  <footer className="flex h-[22px] shrink-0 items-center border-t border-[#c0c0c0] bg-[#f1f1f1] pl-2 pr-2 text-[#444]">
    <span>Страница 1 из 7</span>
    <span className="ml-5">Число слов: 1954</span>
    <button type="button" aria-label="Правописание" className="ml-5">
      <svg viewBox="0 0 15 14" className="h-3.5 w-[15px]" fill="none" stroke="#555" aria-hidden="true">
        <path d="M7 2.5Q4 .5.5 1.5v10q4-1 6.500 1zM7 2.5q2-1.500 5.500-1v2M7 12.5q2-1.500 5.500-1V10" />
        <path d="M9 7l2 2 3.5-4" strokeWidth="1.5" />
      </svg>
    </button>
    <span className="ml-4">русский</span>
    <div className="ml-auto flex h-full items-center">
      <button type="button" aria-label="Режим чтения" className="mr-3">
        <svg viewBox="0 0 14 12" className="h-3 w-3.5" fill="none" stroke="#666" aria-hidden="true">
          <path d="M.5.5h5.5l1 1 1-1h5.5v10H8l-1 1-1-1H.5zM7 1.5v10M2 3.5h3.5M2 5.5h3.5M2 7.5h3.5M8.5 3.5H12M8.5 5.5H12M8.5 7.5H12" />
        </svg>
      </button>
      <button type="button" aria-label="Разметка страницы" className="flex h-full w-[38px] items-center justify-center bg-[#c9c9c9]">
        <svg viewBox="0 0 14 13" className="h-[13px] w-3.5" fill="none" stroke="#555" aria-hidden="true">
          <path d="M.5.5h13v12H.5zM2.5 3.5h9M2.5 5.5h9M2.5 7.5h9M2.5 9.5h9" />
        </svg>
      </button>
      <button type="button" aria-label="Веб-документ" className="ml-3">
        <svg viewBox="0 0 15 13" className="h-[13px] w-[15px]" fill="none" stroke="#666" aria-hidden="true">
          <path d="M7 11.5H.5v-11h12V5M2.5 3.5h8M2.5 5.5h5M2.5 7.5h4M2.5 9.5h4" />
          <circle cx="10.5" cy="8.5" r="3.5" fill="#fff" />
          <path d="M8 6l3 1-1 3 2 1 1-3" fill="#666" />
        </svg>
      </button>
      <button type="button" aria-label="Уменьшить" className="ml-4">
        <span className="block h-0.5 w-[7px] bg-[#666]" />
      </button>
      <input
        type="range"
        aria-label="Масштаб"
        min={0}
        max={100}
        defaultValue={53}
        className="mx-1 h-3 w-[100px] appearance-none bg-[linear-gradient(#9a9a9a,#9a9a9a)] bg-[length:100%_1px] bg-center bg-no-repeat [&::-webkit-slider-thumb]:h-[11px] [&::-webkit-slider-thumb]:w-1 [&::-webkit-slider-thumb]:appearance-none [&::-webkit-slider-thumb]:bg-[#666]"
      />
      <button type="button" aria-label="Увеличить">
        <svg viewBox="0 0 8 8" className="h-2 w-2" stroke="#666" strokeWidth="2" aria-hidden="true">
          <path d="M0 4h8M4 0v8" />
        </svg>
      </button>
      <span className="ml-4">120%</span>
    </div>
  </footer>
);

const App: React.FC = () => {
  return (
    <div className="flex h-screen flex-col overflow-hidden font-['Open_Sans','Noto_Sans',sans-serif] text-[11px]">
      <header className="relative z-10 shrink-0 bg-[#2b579a]">
        <TitleBar />
        <TabBar />
        <Ribbon />
      </header>
      <Document />
      <StatusBar />
    </div>
  );
};

export default App;
